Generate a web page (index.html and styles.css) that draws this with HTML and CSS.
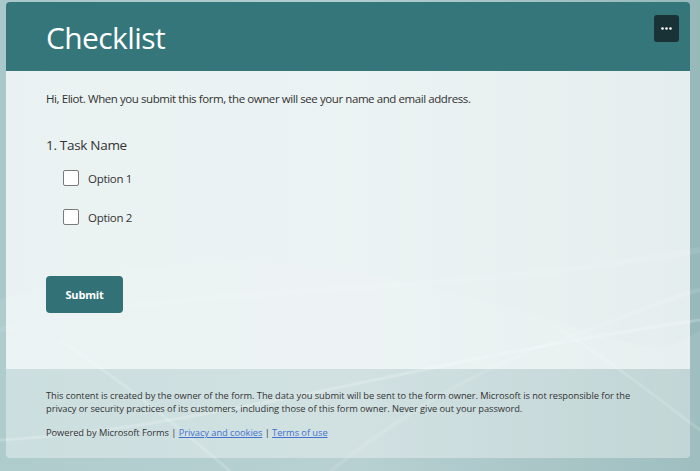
FILE: index.html
```html
<!DOCTYPE html>
<html lang="en">
<head>
<meta charset="utf-8">
<title>Checklist</title>
<link rel="stylesheet" href="styles.css">
</head>
<body>
<svg class="backdrop" width="700" height="471" viewBox="0 0 700 471" aria-hidden="true">
  <defs>
    <linearGradient id="bg" x1="0" y1="0" x2="1" y2="0">
      <stop offset="0" stop-color="#a9c8c9"/>
      <stop offset="0.5" stop-color="#b2cdcf"/>
      <stop offset="1" stop-color="#97b9ba"/>
    </linearGradient>
  </defs>
  <rect width="700" height="471" fill="url(#bg)"/>
  <path d="M0 300 C 150 250, 300 250, 480 300 S 650 360, 700 330 L700 471 L0 471 Z" fill="#ffffff" opacity="0.08"/>
  <path d="M0 330 C 200 280, 420 300, 700 250" stroke="#ffffff" stroke-width="6" fill="none" opacity="0.08"/>
  <path d="M0 440 C 200 430, 420 360, 700 320" stroke="#ffffff" stroke-width="3" fill="none" opacity="0.2"/>
  <path d="M60 340 C 120 380, 170 420, 230 471" stroke="#ffffff" stroke-width="3" fill="none" opacity="0.16"/>
  <path d="M330 471 C 420 400, 500 360, 560 340 S 660 300, 700 290" stroke="#ffffff" stroke-width="4" fill="none" opacity="0.1"/>
  <path d="M560 330 C 610 360, 660 400, 700 430" stroke="#ffffff" stroke-width="3" fill="none" opacity="0.14"/>
</svg>
<main class="card">
  <header class="card-header">
    <h1 class="title">Checklist</h1>
    <button class="more-btn" type="button" aria-label="More options">
      <svg width="11" height="3" viewBox="0 0 11 3"><circle cx="1.5" cy="1.5" r="1.3" fill="#fff"/><circle cx="5.5" cy="1.5" r="1.3" fill="#fff"/><circle cx="9.5" cy="1.5" r="1.3" fill="#fff"/></svg>
    </button>
  </header>
  <section class="card-body">
    <p class="greeting">Hi, Eliot. When you submit this form, the owner will see your name and email address.</p>
    <div class="question">
      <div class="question-title">1. Task Name</div>
      <label class="option"><span class="checkbox"></span><span>Option 1</span></label>
      <label class="option"><span class="checkbox"></span><span>Option 2</span></label>
    </div>
    <button class="submit-btn" type="button">Submit</button>
  </section>
  <footer class="card-footer">
    <p class="disclaimer">This content is created by the owner of the form. The data you submit will be sent to the form owner. Microsoft is not responsible for the privacy or security practices of its customers, including those of this form owner. Never give out your password.</p>
    <p class="powered">Powered by Microsoft Forms | <a href="#">Privacy and cookies</a> | <a href="#">Terms of use</a></p>
  </footer>
</main>
</body>
</html>
```

FILE: styles.css
```css
html, body {
  margin: 0;
  padding: 0;
}
body {
  width: 700px;
  height: 471px;
  overflow: hidden;
  position: relative;
  font-family: "Open Sans", "Noto Sans", sans-serif;
  color: #333;
}
.backdrop {
  position: absolute;
  left: 0;
  top: 0;
  z-index: 0;
}
.card {
  position: relative;
  z-index: 1;
  margin: 2px 0 0 6px;
  width: 684px;
  border-radius: 4px;
  overflow: hidden;
  display: flex;
  flex-direction: column;
}
.card-header {
  height: 69px;
  background: #34767a;
  display: flex;
  align-items: flex-start;
  justify-content: space-between;
  padding: 0 11px 0 40px;
  box-sizing: border-box;
}
.title {
  margin: 15px 0 0;
  font-size: 30px;
  font-weight: 400;
  line-height: 42px;
  color: #fff;
  letter-spacing: -0.6px;
}
.more-btn {
  margin-top: 13px;
  width: 25px;
  height: 27px;
  border: 0;
  border-radius: 3px;
  background: #183235;
  display: flex;
  align-items: center;
  justify-content: center;
  padding: 0;
}
.card-body {
  height: 298px;
  box-sizing: border-box;
  background: rgba(255, 255, 255, 0.75);
  padding: 19px 40px 0;
}
.greeting {
  margin: 0;
  font-size: 11.5px;
  line-height: 17px;
  color: #323232;
  letter-spacing: -0.42px;
}
.question {
  margin-top: 28px;
}
.question-title {
  font-size: 13.5px;
  line-height: 20px;
  color: #333;
  letter-spacing: -0.3px;
}
.option {
  display: flex;
  align-items: center;
  gap: 9px;
  margin: 15px 0 0 17px;
  height: 16px;
  font-size: 11.5px;
  letter-spacing: -0.3px;
  color: #333;
}
.option + .option {
  margin-top: 23px;
}
.checkbox {
  width: 14px;
  height: 14px;
  border: 1px solid #7a7a7a;
  border-radius: 2px;
  background: #fff;
}
.submit-btn {
  margin-top: 51px;
  width: 77px;
  height: 37px;
  border: 0;
  border-radius: 4px;
  background: #327277;
  color: #fff;
  font-family: "Open Sans", sans-serif;
  font-size: 11px;
  font-weight: 700;
  letter-spacing: -0.2px;
  padding: 0;
}
.card-footer {
  height: 89px;
  box-sizing: border-box;
  background: rgba(255, 255, 255, 0.36);
  padding: 20px 40px 0;
  font-size: 9.3px;
  letter-spacing: -0.05px;
  color: #333;
}
.disclaimer {
  margin: 0;
  line-height: 13px;
}
.powered {
  margin: 11px 0 0;
  line-height: 13px;
}
.powered a {
  color: #4470cf;
}
```
